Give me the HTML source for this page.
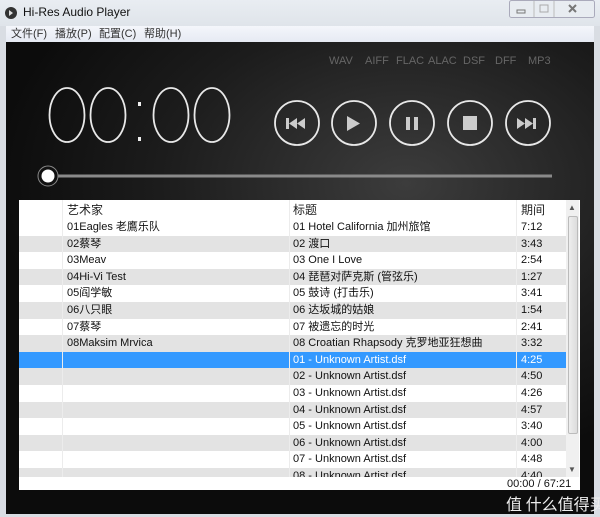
<!DOCTYPE html>
<html><head><meta charset="utf-8"><style>
*{margin:0;padding:0;box-sizing:border-box}
html,body{width:600px;height:517px;overflow:hidden}
body{background:#d9dde3;font-family:"Liberation Sans","Noto Sans CJK SC",sans-serif;position:relative}
.title{position:absolute;left:0;top:0;width:600px;height:26px;background:linear-gradient(#e9edf2,#dfe4ea)}
.title span{position:absolute;left:23px;top:5px;font-size:12px;color:#111;line-height:14px}
.menu{position:absolute;left:6px;top:26px;width:588px;height:16px;background:linear-gradient(#f4f6fb,#e6eaf3);font-size:11px;color:#333}
.menu span{position:absolute;top:1px;line-height:14px}
.main{position:absolute;left:6px;top:42px;width:588px;height:472px;background:radial-gradient(ellipse 70% 60% at 68% 30%,#3c3c3c 0%,#1c1c1c 60%,#0c0c0c 100%)}
.fmt{position:absolute;top:55px;font-size:11px;color:#666;line-height:13px}
.list{position:absolute;left:19px;top:200px;width:561px;height:290px;background:#fff;overflow:hidden;font-size:11px;color:#111}
.row{position:absolute;left:0;width:547px;height:16.6px;overflow:hidden}
.row.g{background:#e3e3e3}
.row.sel{background:#3399ff;color:#fff}
.row span{position:absolute;top:2px;white-space:nowrap;line-height:13px}
.c1{left:48px}.c2{left:274px}.c3{left:502px}
.hdr{position:absolute;left:0;top:0;width:547px;height:19px;background:#fff;font-size:12px;color:#222}
.hdr span{position:absolute;top:3px;line-height:14px}
.vl{position:absolute;top:0;width:1px;height:277px;background:#ececec}
.scroll{position:absolute;left:547px;top:0;width:13px;height:277px;background:#f0f0f0}
.thumb{position:absolute;left:549px;top:16px;width:10px;height:218px;background:linear-gradient(90deg,#eee,#ddd);border:1px solid #bbb;border-radius:2px}
</style></head><body>
<div class="title">
<svg style="position:absolute;left:4px;top:6px" width="14" height="14"><circle cx="7" cy="7" r="6" fill="#333"/><path d="M5 4v6l4-3z" fill="#ddd"/></svg>
<span>Hi-Res Audio Player</span>
<svg style="position:absolute;left:509px;top:0" width="86" height="18"><rect x="0.5" y="0.5" width="85" height="17" rx="2" fill="#e8ecf1" stroke="#aab"/><line x1="25" y1="1" x2="25" y2="17" stroke="#bbb"/><line x1="45" y1="1" x2="45" y2="17" stroke="#bbb"/><rect x="8" y="10" width="8" height="3" fill="none" stroke="#777"/><rect x="31" y="5" width="8" height="7" fill="none" stroke="#aaa"/><path d="M60 5l7 7M67 5l-7 7" stroke="#777" stroke-width="2"/></svg>
</div>
<div class="menu"><span style="left:5px">文件(F)</span><span style="left:49px">播放(P)</span><span style="left:93px">配置(C)</span><span style="left:138px">帮助(H)</span></div>
<div class="main"></div>
<div class="fmt" style="left:329px">WAV</div><div class="fmt" style="left:365px">AIFF</div><div class="fmt" style="left:396px">FLAC</div><div class="fmt" style="left:428px">ALAC</div><div class="fmt" style="left:463px">DSF</div><div class="fmt" style="left:495px">DFF</div><div class="fmt" style="left:528px">MP3</div>
<svg style="position:absolute;left:0;top:0" width="600" height="200">
<g fill="none" stroke="#e8e8e8" stroke-width="1.8">
<ellipse cx="67" cy="115" rx="17.5" ry="27"/><ellipse cx="108" cy="115" rx="17.5" ry="27"/><ellipse cx="171" cy="115" rx="17.5" ry="27"/><ellipse cx="212" cy="115" rx="17.5" ry="27"/>
<circle cx="297" cy="123" r="22"/><circle cx="354" cy="123" r="22"/><circle cx="412" cy="123" r="22"/><circle cx="470" cy="123" r="22"/><circle cx="528" cy="123" r="22"/>
</g>
<rect x="138" y="102" width="3" height="4" fill="#eee"/><rect x="138" y="137" width="3" height="4" fill="#eee"/>
<g fill="#ccc">
<rect x="286" y="118" width="3" height="11"/><path d="M289 123.5l8-5.5v11zM297 123.5l8-5.5v11z"/>
<path d="M347 116v15l13-7.5z"/>
<rect x="406" y="117" width="4" height="13"/><rect x="414" y="117" width="4" height="13"/>
<rect x="463" y="116" width="14" height="14"/>
<path d="M517 118l8 5.5-8 5.5zM525 118l8 5.5-8 5.5z"/><rect x="533" y="118" width="3" height="11"/>
</g>
<rect x="48" y="174.5" width="504" height="3" fill="#8a8a8a"/>
<circle cx="48" cy="176" r="10" fill="#111" stroke="#888" stroke-width="1"/><circle cx="48" cy="176" r="6.5" fill="#fff"/>
</svg>
<div class="list">
<div class="hdr"><span style="left:48px">艺术家</span><span style="left:274px">标题</span><span style="left:502px">期间</span></div>
<div class="row" style="top:19px"><span class="c1">01Eagles 老鷹乐队</span><span class="c2">01 Hotel California 加州旅馆</span><span class="c3">7:12</span></div>
<div class="row g" style="top:35.6px"><span class="c1">02蔡琴</span><span class="c2">02 渡口</span><span class="c3">3:43</span></div>
<div class="row" style="top:52.2px"><span class="c1">03Meav</span><span class="c2">03 One I Love</span><span class="c3">2:54</span></div>
<div class="row g" style="top:68.8px"><span class="c1">04Hi-Vi Test</span><span class="c2">04 琵琶对萨克斯 (管弦乐)</span><span class="c3">1:27</span></div>
<div class="row" style="top:85.4px"><span class="c1">05阎学敏</span><span class="c2">05 鼓诗 (打击乐)</span><span class="c3">3:41</span></div>
<div class="row g" style="top:102px"><span class="c1">06八只眼</span><span class="c2">06 达坂城的姑娘</span><span class="c3">1:54</span></div>
<div class="row" style="top:118.6px"><span class="c1">07蔡琴</span><span class="c2">07 被遗忘的时光</span><span class="c3">2:41</span></div>
<div class="row g" style="top:135.2px"><span class="c1">08Maksim Mrvica</span><span class="c2">08 Croatian Rhapsody 克罗地亚狂想曲</span><span class="c3">3:32</span></div>
<div class="row sel" style="top:151.8px"><span class="c2">01 - Unknown Artist.dsf</span><span class="c3">4:25</span></div>
<div class="row g" style="top:168.4px"><span class="c2">02 - Unknown Artist.dsf</span><span class="c3">4:50</span></div>
<div class="row" style="top:185px"><span class="c2">03 - Unknown Artist.dsf</span><span class="c3">4:26</span></div>
<div class="row g" style="top:201.6px"><span class="c2">04 - Unknown Artist.dsf</span><span class="c3">4:57</span></div>
<div class="row" style="top:218.2px"><span class="c2">05 - Unknown Artist.dsf</span><span class="c3">3:40</span></div>
<div class="row g" style="top:234.8px"><span class="c2">06 - Unknown Artist.dsf</span><span class="c3">4:00</span></div>
<div class="row" style="top:251.4px"><span class="c2">07 - Unknown Artist.dsf</span><span class="c3">4:48</span></div>
<div class="row g" style="top:268px;height:9px"><span class="c2">08 - Unknown Artist.dsf</span><span class="c3">4:40</span></div>
<div class="vl" style="left:43px"></div><div class="vl" style="left:270px"></div><div class="vl" style="left:497px"></div>
<div class="scroll"></div><div class="thumb"></div>
<div style="position:absolute;left:549px;top:4px;font-size:8px;color:#555;line-height:8px">▲</div>
<div style="position:absolute;left:549px;top:266px;font-size:8px;color:#555;line-height:8px">▼</div>
<div style="position:absolute;left:488px;top:278px;font-size:11px;color:#111;line-height:12px">00:00 / 67:21</div>
</div>
<div style="position:absolute;left:506px;top:493px;font-size:16px;line-height:20px;white-space:nowrap;color:#eee;font-family:'Noto Sans CJK SC',sans-serif">值 什么值得买</div>
</body></html>
